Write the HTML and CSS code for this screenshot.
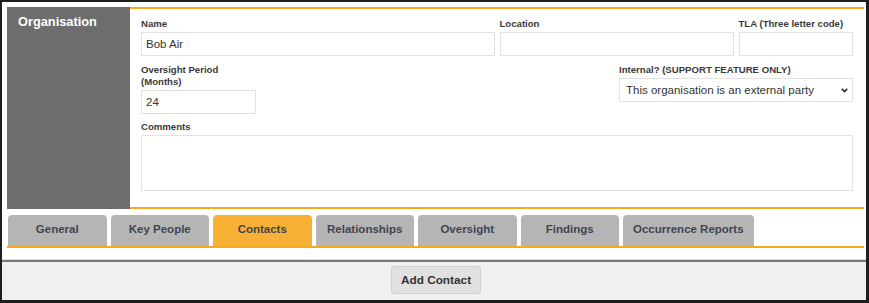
FILE: index.html
```html
<!DOCTYPE html>
<html lang="en">
<head>
    <meta charset="UTF-8">
    <meta name="viewport" content="width=device-width, initial-scale=1.0">
    <title>Organisation</title>
    <link rel="stylesheet" href="styles.css">
</head>
<body>
    <div class="frame">
        <div class="page">
            <!-- Organisation details -->
            <div class="org">
                <div class="org-side">Organisation</div>
                <div class="org-details">
                    <div class="field span-3">
                        <label>Name</label>
                        <input type="text" value="Bob Air">
                    </div>
                    <div class="field span-2">
                        <label>Location</label>
                        <input type="text">
                    </div>
                    <div class="field">
                        <label>TLA (Three letter code)</label>
                        <input type="text">
                    </div>

                    <div class="field">
                        <label>Oversight Period<br>(Months)</label>
                        <input type="text" value="24">
                    </div>
                    <div class="field internal">
                        <label>Internal? (SUPPORT FEATURE ONLY)</label>
                        <div class="select-wrap">
                            <select>
                                <option>This organisation is an external party</option>
                                <option>This organisation is internal</option>
                            </select>
                            <svg class="chevron" width="7" height="5" viewBox="0 0 7 5">
                                <path d="M0.8 0.8 L3.5 3.6 L6.2 0.8" fill="none" stroke="#222" stroke-width="1.6"/>
                            </svg>
                        </div>
                    </div>

                    <div class="field span-6 comments">
                        <label>Comments</label>
                        <textarea></textarea>
                    </div>
                </div>
            </div>

            <!-- Tabs -->
            <div class="tabs">
                <div class="tab">General</div>
                <div class="tab">Key People</div>
                <div class="tab active">Contacts</div>
                <div class="tab">Relationships</div>
                <div class="tab">Oversight</div>
                <div class="tab">Findings</div>
                <div class="tab">Occurrence Reports</div>
            </div>
        </div>

        <div class="footer">
            <button type="button">Add Contact</button>
        </div>
    </div>
</body>
</html>
```

FILE: styles.css
```css
* {
    box-sizing: border-box;
}

html, body {
    margin: 0;
    padding: 0;
    background: #ffffff;
}

body {
    font-family: "Liberation Sans", Arial, sans-serif;
    color: #333;
}

.frame {
    height: 303px;
    border-style: solid;
    border-color: #1e1e1e;
    border-width: 2px 3px 3px 2px;
    display: flex;
    flex-direction: column;
    background: #fff;
}

.page {
    padding: 5px 2px 11px 5px;
    border-bottom: 1px solid #dedede;
}

.org {
    display: flex;
    height: 202px;
}

.org-side {
    width: 123px;
    background: #6d6d6d;
    color: #fff;
    font-weight: bold;
    font-size: 12.8px;
    padding: 7px 11px;
}

.org-details {
    flex: 1;
    border-top: 2px solid #f6a821;
    border-bottom: 2px solid #f6a821;
    padding: 9px 11px 0 11px;
    display: grid;
    grid-template-columns: repeat(6, 1fr);
    column-gap: 5px;
    row-gap: 8px;
    align-items: start;
    align-content: start;
}

.field {
    display: flex;
    flex-direction: column;
}

.span-2 { grid-column: span 2; }
.span-3 { grid-column: span 3; }
.span-6 { grid-column: span 6; }

.internal {
    grid-column: 5 / 7;
}

.comments {
    margin-top: -1px;
}

.field label {
    font-size: 9.6px;
    font-weight: bold;
    line-height: 12px;
    color: #3a3a3a;
    margin-bottom: 2px;
    white-space: nowrap;
}

.field input,
.field select,
.field textarea {
    font-family: "Liberation Sans", Arial, sans-serif;
    font-size: 11.5px;
    color: #333;
    border: 1px solid #e2e2e2;
    border-radius: 0;
    background: #fff;
    height: 24px;
    width: 100%;
    margin: 0;
    outline: none;
}

.field input {
    padding: 0 4px;
}

.field textarea {
    height: 56px;
    resize: none;
    padding: 4px;
}

.select-wrap {
    position: relative;
}

.field select {
    appearance: none;
    -webkit-appearance: none;
    padding: 0 20px 0 6px;
}

.chevron {
    position: absolute;
    right: 5px;
    top: 10px;
}

.tabs {
    display: flex;
    gap: 4px;
    margin-top: 6px;
    padding-left: 1px;
    border-bottom: 2px solid #f6a821;
}

.tab {
    min-width: 98.5px;
    height: 31px;
    line-height: 29px;
    padding: 0 10px 2px 10px;
    text-align: center;
    font-size: 11.5px;
    font-weight: bold;
    color: #3f4451;
    background: #b5b5b5;
    border-radius: 4px 4px 0 0;
}

.tab.active {
    background: #f8b134;
}

.footer {
    flex: 1;
    background: #f0f0f0;
    border-top: 2px solid #7a7a7a;
    display: flex;
    align-items: center;
    justify-content: center;
    padding-bottom: 2px;
}

.footer button {
    font-family: "Liberation Sans", Arial, sans-serif;
    font-size: 11.8px;
    font-weight: bold;
    color: #333;
    background: #e1e1e1;
    border: 1px solid #cfcfcf;
    border-radius: 3px;
    height: 28px;
    padding: 0 9px;
    margin-left: 4px;
}
```
